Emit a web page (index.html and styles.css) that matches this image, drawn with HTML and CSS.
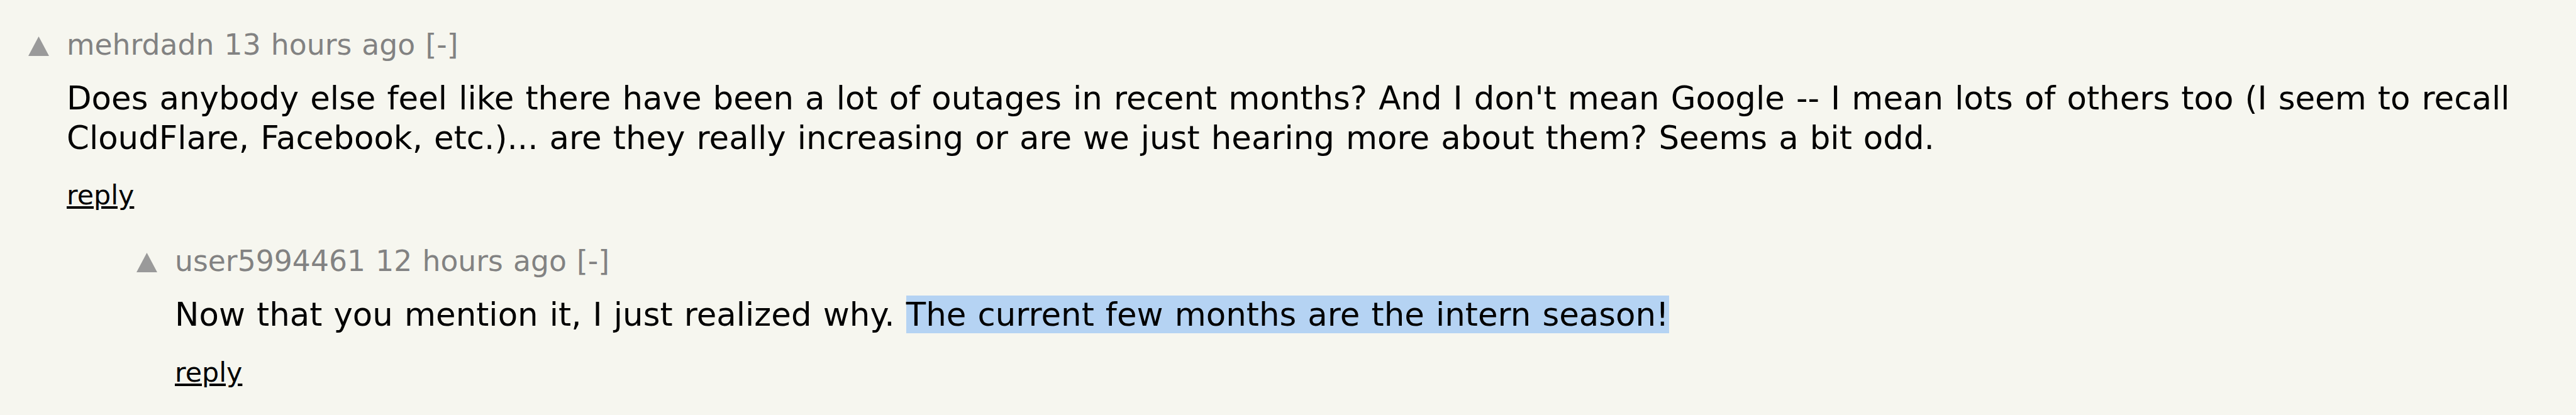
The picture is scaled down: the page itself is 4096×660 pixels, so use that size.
FILE: index.html
```html
<!DOCTYPE html>
<html lang="en">
<head>
<meta charset="utf-8">
<title>Comments</title>
<link rel="stylesheet" href="styles.css">
</head>
<body>
<div class="thread">
  <div class="comment">
    <div class="vote">
      <svg class="arrow" viewBox="0 0 33 31" aria-hidden="true"><polygon points="16.5,0 33,31 0,31"/></svg>
    </div>
    <div class="main">
      <div class="head"><a class="user" href="#">mehrdadn</a> <a class="age" href="#">13 hours ago</a> <a class="toggle" href="#">[-]</a></div>
      <div class="text">Does anybody else feel like there have been a lot of outages in recent months? And I don't mean Google -- I mean lots of others too (I seem to recall CloudFlare, Facebook, etc.)... are they really increasing or are we just hearing more about them? Seems a bit odd.</div>
      <div class="reply"><a href="#">reply</a></div>
    </div>
  </div>
  <div class="comment nested">
    <div class="vote">
      <svg class="arrow" viewBox="0 0 33 31" aria-hidden="true"><polygon points="16.5,0 33,31 0,31"/></svg>
    </div>
    <div class="main">
      <div class="head"><a class="user" href="#">user5994461</a> <a class="age" href="#">12 hours ago</a> <a class="toggle" href="#">[-]</a></div>
      <div class="text">Now that you mention it, I just realized why. <span class="hl">The current few months are the intern season!</span></div>
      <div class="reply"><a href="#">reply</a></div>
    </div>
  </div>
</div>
</body>
</html>
```
FILE: styles.css
```css
html, body {
  margin: 0;
  background: #f6f6ef;
}
body {
  font-family: "DejaVu Sans", Verdana, Geneva, sans-serif;
  color: #000;
}
.thread {
  display: flex;
  flex-direction: column;
  gap: 50px;
  padding: 41px 0 0 45px;
}
.comment {
  display: flex;
  align-items: flex-start;
}
.comment.nested {
  padding-left: 172px;
}
.vote {
  flex: none;
  width: 61px;
}
.arrow {
  display: block;
  width: 33px;
  height: 31px;
  margin-top: 17px;
  fill: #9a9a9a;
}
.main {
  flex: 1;
  min-width: 0;
}
.head {
  font-size: 45.7px;
  line-height: 62px;
  color: #828282;
  margin-bottom: 22px;
  word-spacing: 0.034em;
  white-space: nowrap;
}
.head a {
  color: #828282;
  text-decoration: none;
}
.text {
  font-size: 51.4px;
  line-height: 62.5px;
  word-spacing: 0.034em;
}
.hl {
  background: #b5d3f3;
}
.reply {
  margin-top: 35px;
  font-size: 42.8px;
  line-height: 50px;
}
.reply a {
  color: #000;
  text-decoration: underline;
}
```
